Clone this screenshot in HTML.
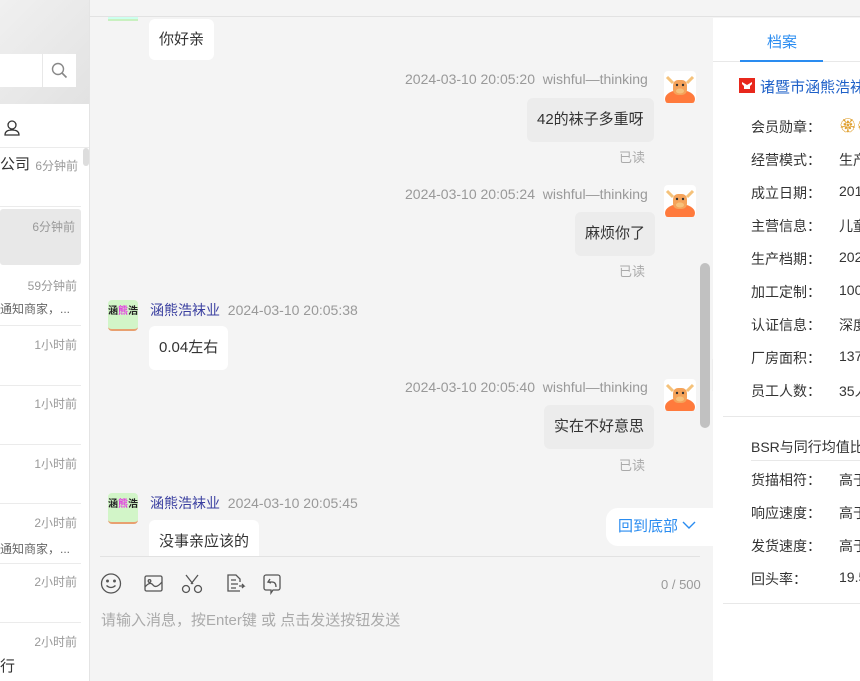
<!DOCTYPE html>
<html><head><meta charset="utf-8"><style>
*{box-sizing:border-box;margin:0;padding:0}
body{width:860px;height:681px;overflow:hidden;position:relative;background:#f4f4f4;font-family:"Liberation Sans","Noto Sans CJK SC",sans-serif;color:#333}
.abs{position:absolute}
#left{left:0;top:0;width:90px;height:681px;background:#fff;border-right:1px solid #e4e4e4;overflow:hidden}
#lefttop{left:0;top:0;width:89px;height:104px;background:linear-gradient(135deg,#f0f0f0,#e2e2e2)}
.t{font-size:12px;color:#999;position:absolute;right:12px}
.sep{position:absolute;left:0;width:81px;height:1px;background:#ebebeb}
.pv{position:absolute;left:0;font-size:12px;color:#666;white-space:nowrap}
.bub{position:absolute;padding:0 10px;height:44px;line-height:44px;font-size:15px;border-radius:6px;white-space:nowrap}
.me{background:#ececec;color:#333}
.them{background:#fff;color:#333}
.meta{position:absolute;font-size:14px;color:#999;white-space:nowrap}
.read{position:absolute;font-size:13px;color:#aaa}
.ava{position:absolute;width:32px;height:32px;border-radius:4px;overflow:hidden}
#right{left:713px;top:18px;width:147px;height:663px;background:#fff;overflow:hidden}
.row{position:absolute;left:38px;font-size:14px;color:#333;white-space:nowrap}
.row span{position:absolute;left:88px}
</style></head><body>
<div class="abs" style="left:90px;top:0;width:770px;height:17px;background:#f4f4f4;border-bottom:1px solid #e2e2e2"></div>
<div id="left" class="abs">
 <div id="lefttop" class="abs"></div>
 <div class="abs" style="left:0;top:54px;width:42px;height:33px;background:#fff"></div>
 <div class="abs" style="left:43px;top:54px;width:33px;height:33px;background:#fff">
  <svg width="33" height="33"><circle cx="15" cy="15" r="5.5" fill="none" stroke="#888" stroke-width="1.4"/><path d="M19 19l4.5 4.5" stroke="#888" stroke-width="1.6"/></svg></div>
 <svg class="abs" style="left:3px;top:119px" width="18" height="18"><circle cx="9" cy="6" r="4" fill="none" stroke="#333" stroke-width="1.3"/><path d="M2 16c0-4 3-5 7-5s7 1 7 5z" fill="none" stroke="#333" stroke-width="1.3"/></svg>
 <div class="sep" style="top:147px;width:89px"></div>
 <div class="abs" style="left:83px;top:148px;width:6px;height:18px;background:#ddd;border-radius:3px"></div>
 <div class="pv" style="top:153px;font-size:15px;color:#333">公司</div><div class="t" style="top:157px;right:11px">6分钟前</div>
 <div class="sep" style="top:206px"></div>
 <div class="abs" style="left:0;top:209px;width:81px;height:56px;background:#e8e8e8;border-radius:3px"></div>
 <div class="t" style="top:218px;right:14px">6分钟前</div>
 <div class="t" style="top:277px">59分钟前</div><div class="pv" style="top:300px">通知商家，...</div>
 <div class="sep" style="top:325px"></div>
 <div class="t" style="top:336px">1小时前</div>
 <div class="sep" style="top:385px"></div>
 <div class="t" style="top:395px">1小时前</div>
 <div class="sep" style="top:444px"></div>
 <div class="t" style="top:455px">1小时前</div>
 <div class="sep" style="top:503px"></div>
 <div class="t" style="top:514px">2小时前</div><div class="pv" style="top:540px">通知商家，...</div>
 <div class="sep" style="top:563px"></div>
 <div class="t" style="top:573px">2小时前</div>
 <div class="sep" style="top:622px"></div>
 <div class="pv" style="top:655px;font-size:15px;color:#333">行</div><div class="t" style="top:633px">2小时前</div>
</div>

<!-- chat -->
<div class="abs" style="left:108px;top:17px;width:30px;height:4px;background:#cfe;border-bottom:2px solid #c9f0c0"></div>
<div class="bub them" style="left:149px;top:19px;height:41px;line-height:41px">你好亲</div>

<div class="meta" style="left:405px;top:71px">2024-03-10 20:05:20&nbsp; wishful—thinking</div>
<div class="bub me" style="left:527px;top:98px">42的袜子多重呀</div>
<div class="read" style="left:619px;top:147px">已读</div>
<div class="meta" style="left:405px;top:186px">2024-03-10 20:05:24&nbsp; wishful—thinking</div>
<div class="bub me" style="left:575px;top:212px">麻烦你了</div>
<div class="read" style="left:619px;top:261px">已读</div>
<div class="meta" style="left:150px;top:300px"><span style="color:#3a3fa0">涵熊浩袜业</span>&nbsp; 2024-03-10 20:05:38</div>
<div class="bub them" style="left:149px;top:326px">0.04左右</div>
<div class="meta" style="left:405px;top:379px">2024-03-10 20:05:40&nbsp; wishful—thinking</div>
<div class="bub me" style="left:544px;top:405px">实在不好意思</div>
<div class="read" style="left:619px;top:455px">已读</div>
<div class="meta" style="left:150px;top:493px"><span style="color:#3a3fa0">涵熊浩袜业</span>&nbsp; 2024-03-10 20:05:45</div>
<div class="bub them" style="left:149px;top:520px;height:36px;border-radius:6px 6px 0 0">没事亲应该的</div>

<!-- avatars -->
<svg class="ava" style="left:664px;top:71px" viewBox="0 0 32 32"><rect width="32" height="32" fill="#fff"/><ellipse cx="16" cy="28" rx="15" ry="9" fill="#ff7a3c"/><path d="M3 6l6 6M29 6l-6 6" stroke="#f5c27a" stroke-width="3"/><rect x="9" y="9" width="14" height="15" rx="5" fill="#f5a35a"/><circle cx="13" cy="14" r="1.2" fill="#333"/><circle cx="19" cy="14" r="1.2" fill="#333"/><ellipse cx="16" cy="20" rx="4" ry="2.5" fill="#f6c27c"/></svg>
<svg class="ava" style="left:664px;top:185px" viewBox="0 0 32 32"><rect width="32" height="32" fill="#fff"/><ellipse cx="16" cy="28" rx="15" ry="9" fill="#ff7a3c"/><path d="M3 6l6 6M29 6l-6 6" stroke="#f5c27a" stroke-width="3"/><rect x="9" y="9" width="14" height="15" rx="5" fill="#f5a35a"/><circle cx="13" cy="14" r="1.2" fill="#333"/><circle cx="19" cy="14" r="1.2" fill="#333"/><ellipse cx="16" cy="20" rx="4" ry="2.5" fill="#f6c27c"/></svg>
<svg class="ava" style="left:664px;top:379px" viewBox="0 0 32 32"><rect width="32" height="32" fill="#fff"/><ellipse cx="16" cy="28" rx="15" ry="9" fill="#ff7a3c"/><path d="M3 6l6 6M29 6l-6 6" stroke="#f5c27a" stroke-width="3"/><rect x="9" y="9" width="14" height="15" rx="5" fill="#f5a35a"/><circle cx="13" cy="14" r="1.2" fill="#333"/><circle cx="19" cy="14" r="1.2" fill="#333"/><ellipse cx="16" cy="20" rx="4" ry="2.5" fill="#f6c27c"/></svg>
<div class="ava" style="left:108px;top:300px;width:30px;height:31px;background:#d2f5c8;font-size:10px;font-weight:bold;text-align:center;line-height:24px;color:#222;border-bottom:2px solid #e8a070">涵<span style="color:#e23ce0">熊</span>浩</div>
<div class="ava" style="left:108px;top:493px;width:30px;height:31px;background:#d2f5c8;font-size:10px;font-weight:bold;text-align:center;line-height:24px;color:#222;border-bottom:2px solid #e8a070">涵<span style="color:#e23ce0">熊</span>浩</div>

<div class="abs" style="left:700px;top:263px;width:10px;height:165px;background:#c1c1c1;border-radius:5px"></div>
<div class="abs" style="left:712px;top:359px;width:14px;height:32px;background:#eee;border-radius:0 4px 4px 0;font-size:13px;color:#999;line-height:32px;text-align:center">»</div>

<div class="abs" style="left:606px;top:508px;width:110px;height:38px;background:#fff;border-radius:12px 0 0 12px;color:#2a8cf0;font-size:15px;line-height:38px;padding-left:12px">回到底部 <svg width="14" height="10" style="vertical-align:1px"><path d="M1 2l6 6 6-6" fill="none" stroke="#2a8cf0" stroke-width="1.4"/></svg></div>

<div class="abs" style="left:100px;top:556px;width:600px;height:1px;background:#e2e2e2"></div>
<svg class="abs" style="left:100px;top:572px" width="200" height="24" fill="none" stroke="#555" stroke-width="1.3">
 <circle cx="11" cy="11.5" r="9.5"/><circle cx="7.5" cy="9" r=".8" fill="#555"/><circle cx="14.5" cy="9" r=".8" fill="#555"/><path d="M6.5 13.5q4.5 4 9 0"/>
 <rect x="45" y="4" width="17" height="15" rx="1.5"/><circle cx="49.5" cy="9" r="1.3"/><path d="M45 15q5-6 8-2t9-3"/>
 <path d="M86 3l7 9M98 3l-7 9"/><circle cx="86" cy="17" r="3.5"/><circle cx="98" cy="17" r="3.5"/>
 <path d="M140 19h-12v-16h8l4 4v3M131 8h5M131 12h7M131 16h5M139 14h5l-2-2M144 14l-2 2"/>
 <path d="M166 3h12a2 2 0 0 1 2 2v11a2 2 0 0 1-2 2h-5l-2 3v-3h-5a2 2 0 0 1-2-2v-11a2 2 0 0 1 2-2z"/><path d="M170 7l-2 3h4q4 0 4 5M168 10l3 1"/>
</svg>
<div class="abs" style="left:661px;top:577px;font-size:13px;color:#999">0 / 500</div>
<div class="abs" style="left:101px;top:609px;font-size:15px;color:#aaa">请输入消息，按Enter键 或 点击发送按钮发送</div>

<!-- right -->
<div id="right" class="abs">
 <div class="abs" style="left:0;top:0;width:147px;height:44px;border-bottom:1px solid #e8e8e8"></div>
 <div class="abs" style="left:54px;top:13px;font-size:15px;color:#2a8cf0">档案</div>
 <div class="abs" style="left:27px;top:42px;width:83px;height:2px;background:#2a8cf0"></div>
 <div class="abs" style="left:26px;top:60px;width:16px;height:15px;background:#e8281c"><svg width="16" height="15"><path d="M3 4l5 3 5-3v2l-2 2v3h-6v-3l-2-2z" fill="#fff"/></svg></div>
 <div class="abs" style="left:47px;top:58px;font-size:15px;color:#1e60c8;white-space:nowrap">诸暨市涵熊浩袜业</div>
 <div class="row" style="top:99px">会员勋章：<span style="color:#e0a030">🏵🏵</span></div>
 <div class="row" style="top:132px">经营模式：<span>生产加工</span></div>
 <div class="row" style="top:165px">成立日期：<span>2015</span></div>
 <div class="row" style="top:198px">主营信息：<span>儿童袜</span></div>
 <div class="row" style="top:231px">生产档期：<span>2024</span></div>
 <div class="row" style="top:264px">加工定制：<span>1000</span></div>
 <div class="row" style="top:297px">认证信息：<span>深度验厂</span></div>
 <div class="row" style="top:330px">厂房面积：<span>1370</span></div>
 <div class="row" style="top:363px">员工人数：<span>35人</span></div>
 <div class="abs" style="left:10px;top:398px;width:137px;height:1px;background:#e8e8e8"></div>
 <div class="row" style="top:419px">BSR与同行均值比较</div>
 <div class="abs" style="left:38px;top:442px;width:109px;height:1px;background:#e8e8e8"></div>
 <div class="row" style="top:452px">货描相符：<span>高于</span></div>
 <div class="row" style="top:485px">响应速度：<span>高于</span></div>
 <div class="row" style="top:518px">发货速度：<span>高于</span></div>
 <div class="row" style="top:551px">回头率：<span>19.5%</span></div>
 <div class="abs" style="left:10px;top:585px;width:137px;height:1px;background:#e8e8e8"></div>
</div>
</body></html>
